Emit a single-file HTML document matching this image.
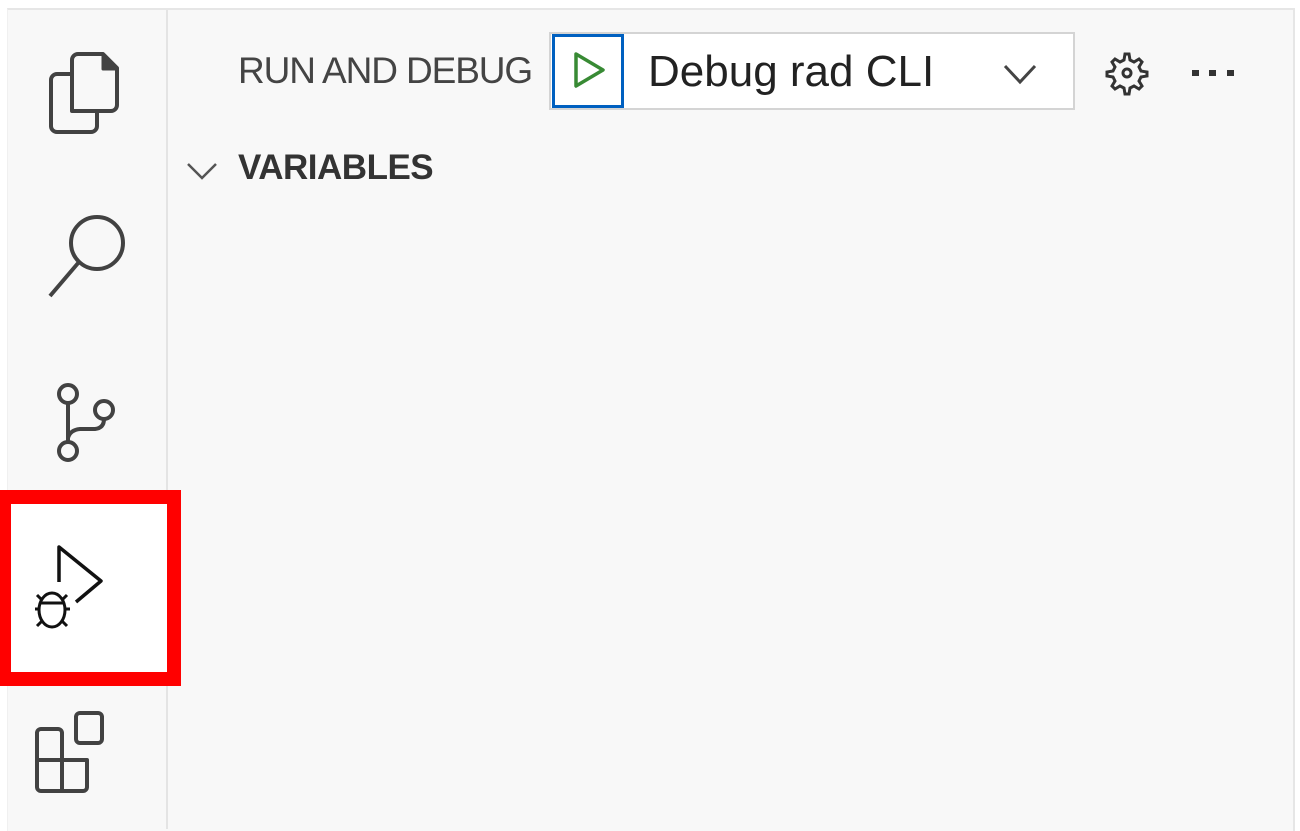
<!DOCTYPE html>
<html><head><style>
body{margin:0;width:1300px;height:829px;background:#fff;position:relative;overflow:hidden;font-family:"Liberation Sans",sans-serif}
.abs{position:absolute;white-space:nowrap}
</style></head><body>
<div class="abs" style="left:7px;top:8px;width:1285px;height:821px;background:#f8f8f8;border-top:2px solid #e6e6e6;border-right:2px solid #e6e6e6;border-left:1px solid #f0f0f0"></div>
<div class="abs" style="left:166px;top:10px;width:2px;height:819px;background:#e4e4e4"></div>
<!-- red box -->
<div class="abs" style="left:0;top:490px;width:181px;height:196px;background:#ff0000"></div>
<div class="abs" style="left:11px;top:504px;width:156px;height:168px;background:#fff"></div>
<svg class="abs" style="left:0;top:0" width="180" height="829" fill="none" stroke="#424242" stroke-width="4" stroke-linejoin="round">
<path d="M72 111 V60 a6 6 0 0 1 6-6 H103 L117 68 V105 a6 6 0 0 1-6 6 Z"/>
<path d="M103 54 V69 H117" fill="#424242" stroke-width="3"/>
<path d="M72 74 H57 a6 6 0 0 0-6 6 V126 a6 6 0 0 0 6 6 H91 a6 6 0 0 0 6-6 V111"/>
<circle cx="97" cy="243" r="26"/>
<line x1="79" y1="262" x2="50" y2="296"/>
<circle cx="68" cy="394" r="9"/><circle cx="104" cy="410" r="9"/><circle cx="68" cy="451" r="9"/>
<path d="M68 403 V442 M104 419 Q104 428 95 429 H80 Q70 430 68 438"/>
<g stroke="#111" stroke-width="3.5">
<path d="M59 582 V547 L101 581 L76 602"/>
<ellipse cx="52" cy="610" rx="13" ry="17" stroke-width="3"/>
<path d="M40 603 H65 M35 609 H40 M65 609 H70 M37 595 L42 600 M67 595 L62 600 M37 626 L42 621 M67 626 L62 621" stroke-width="3"/>
</g>
<path d="M41 729 H58 a4 4 0 0 1 4 4 V791 H41 a4 4 0 0 1-4-4 V733 a4 4 0 0 1 4-4 Z"/>
<path d="M37 760 H87 V787 a4 4 0 0 1-4 4 H62"/>
<rect x="76" y="713" width="26" height="30" rx="4"/>
</svg>
<!-- header -->
<div class="abs" style="left:238px;top:50px;font-size:37px;color:#444;letter-spacing:-1.1px">RUN AND DEBUG</div>
<div class="abs" style="left:549px;top:32px;width:522px;height:74px;background:#fff;border:2px solid #d4d4d4"></div>
<div class="abs" style="left:552px;top:34px;width:66px;height:68px;border:3px solid #0060c0;background:#fff"></div>
<svg class="abs" style="left:570px;top:50px" width="40" height="40"><path d="M6 4 L33 20 L6 36 Z" fill="none" stroke="#388a34" stroke-width="3.5" stroke-linejoin="round"/></svg>
<div class="abs" style="left:648px;top:47px;font-size:44px;color:#222">Debug rad CLI</div>
<svg class="abs" style="left:1000px;top:60px" width="40" height="30"><path d="M5 6 L20 22 L35 6" fill="none" stroke="#444" stroke-width="3"/></svg>
<svg class="abs" style="left:1100px;top:48px" width="50" height="50" fill="none" stroke="#333" stroke-width="3"><path d="M25 6 l4 0 1 6 4 2 5-3 3 3-3 5 2 4 6 1v4l-6 1-2 4 3 5-3 3-5-3-4 2-1 6h-4l-1-6-4-2-5 3-3-3 3-5-2-4-6-1v-4l6-1 2-4-3-5 3-3 5 3 4-2 1-6z"/><circle cx="27" cy="25" r="4"/></svg>
<div class="abs" style="left:1192px;top:70px;width:7px;height:6px;background:#333"></div>
<div class="abs" style="left:1209px;top:70px;width:7px;height:6px;background:#333"></div>
<div class="abs" style="left:1227px;top:70px;width:7px;height:6px;background:#333"></div>
<!-- variables -->
<svg class="abs" style="left:184px;top:158px" width="40" height="30"><path d="M4 6 L18 20 L32 6" fill="none" stroke="#555" stroke-width="2.5"/></svg>
<div class="abs" style="left:238px;top:148px;font-size:35px;font-weight:bold;color:#333;letter-spacing:-0.5px">VARIABLES</div>
</body></html>
